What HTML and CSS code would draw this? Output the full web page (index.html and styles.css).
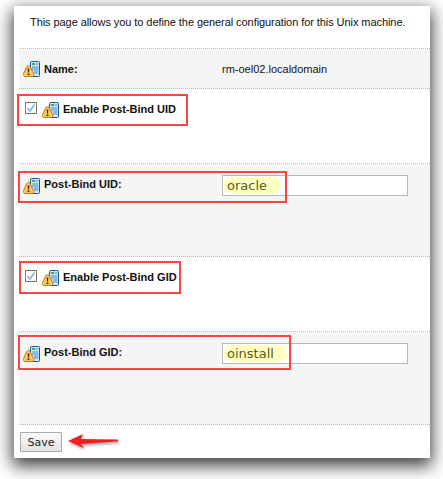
FILE: index.html
```html
<!DOCTYPE html>
<html lang="en">

<head>
    <meta charset="UTF-8">
    <title>Unix Machine Configuration</title>
    <link rel="stylesheet" href="styles.css">
</head>

<body>
    <svg class="defs" width="0" height="0">
        <symbol id="warn-icon" viewBox="0 0 17 16">
            <rect x="7.5" y="0.5" width="9" height="15" rx="1" fill="#d4e6f7" stroke="#14589f"/>
            <rect x="9" y="2" width="3" height="2" fill="#3cae48"/>
            <path d="M12.5 3h3M9 6h6.5M9 8h6.5M11 10h4.5M11 12h4.5" stroke="#3f8bd2" fill="none"/>
            <path d="M5.5 4.5C6.3 4.5 6.8 5 7.2 5.8L10.6 12.6C11.2 13.8 10.5 15.5 9.2 15.5H1.8C.5 15.5-.2 13.8.4 12.6L3.8 5.8C4.2 5 4.7 4.5 5.5 4.5Z" fill="#f8c860" stroke="#c27a1c"/>
            <path d="M4.7 7.5h1.6l-.3 4h-1zM4.6 12.5h1.8v1.5H4.6z" fill="#3e2a06"/>
        </symbol>
        <symbol id="check-box" viewBox="0 0 12 12">
            <rect x="0.5" y="0.5" width="11" height="11" fill="#fff" stroke="#7d776c"/>
            <path d="M2.5 6L5 9L9.5 2.5" fill="none" stroke="#7fb0e6" stroke-width="1.6"/>
        </symbol>
    </svg>

    <div class="window">
        <p class="intro">This page allows you to define the general configuration for this Unix machine.</p>

        <div class="form-rows">
            <div class="row row-name alt">
                <div class="label">
                    <svg class="icon"><use href="#warn-icon"/></svg>
                    <span>Name:</span>
                </div>
                <div class="value">rm-oel02.localdomain</div>
            </div>

            <div class="row row-check">
                <svg class="check"><use href="#check-box"/></svg>
                <svg class="icon"><use href="#warn-icon"/></svg>
                <span class="check-label">Enable Post-Bind UID</span>
            </div>

            <div class="row row-field alt">
                <div class="label">
                    <svg class="icon"><use href="#warn-icon"/></svg>
                    <span class="field-label">Post-Bind UID:</span>
                </div>
                <div class="value">
                    <div class="text-field"><span class="marked marked-uid">oracle</span></div>
                </div>
            </div>

            <div class="row row-check">
                <svg class="check"><use href="#check-box"/></svg>
                <svg class="icon"><use href="#warn-icon"/></svg>
                <span class="check-label">Enable Post-Bind GID</span>
            </div>

            <div class="row row-field alt">
                <div class="label">
                    <svg class="icon"><use href="#warn-icon"/></svg>
                    <span class="field-label">Post-Bind GID:</span>
                </div>
                <div class="value">
                    <div class="text-field"><span class="marked marked-gid">oinstall</span></div>
                </div>
            </div>
        </div>

        <div class="actions">
            <button type="button" class="save-btn">Save</button>
        </div>

        <!-- red annotations drawn on top of the screenshot -->
        <div class="callout callout-1"></div>
        <div class="callout callout-2"></div>
        <div class="callout callout-3"></div>
        <div class="callout callout-4"></div>
        <svg class="arrow" width="60" height="20" viewBox="0 0 60 20">
            <path d="M2 10L17 3L15 8L52 8.5L52 10.5L15 13L18 17Z" fill="#f01f1f"/>
        </svg>
    </div>
</body>

</html>
```

FILE: styles.css
```css
body {
    margin: 0;
    background-color: #fff;
    font-family: "Liberation Sans", Arial, sans-serif;
    font-size: 11px;
    color: #111;
    height: 479px;
    overflow: hidden;
}

.defs {
    position: absolute;
}

.window {
    position: relative;
    box-sizing: border-box;
    width: 416px;
    height: 452px;
    margin: 6px 0 0 14px;
    padding-left: 5px;
    background-color: #fff;
    box-shadow: 0 6px 16px 2px rgba(0, 0, 0, 0.75);
}

.intro {
    margin: 0;
    height: 42px;
    padding: 9px 0 0 11px;
    box-sizing: border-box;
    font-size: 11px;
    line-height: 14px;
    letter-spacing: -0.07px;
    white-space: nowrap;
}

.form-rows {
    border-top: 1px dotted #bbb;
}

.row {
    box-sizing: border-box;
    border-bottom: 1px dotted #bbb;
}

.alt {
    background-color: #f5f5f5;
}

.row-name,
.row-field {
    display: grid;
    grid-template-columns: 203px 1fr;
}

.row-name {
    height: 40px;
    align-items: center;
}

.row-field {
    height: 93px;
    padding-top: 11px;
}

.row-check {
    height: 75px;
    display: flex;
    align-items: flex-start;
    padding: 13px 0 0 6px;
}

.label {
    display: flex;
    align-items: center;
    gap: 4px;
    height: 21px;
    padding-left: 4px;
    font-weight: bold;
}

.row-name .label {
    height: auto;
}

.field-label {
    margin-top: -3px;
}

.icon {
    width: 17px;
    height: 16px;
    flex: none;
}

.check {
    width: 12px;
    height: 12px;
    margin: 0 5px 0 0;
    flex: none;
}

.check-label {
    margin-left: 4px;
    font-weight: bold;
    line-height: 14px;
}

.text-field {
    box-sizing: border-box;
    width: 186px;
    height: 21px;
    padding: 1px;
    background-color: #fff;
    border: 1px solid #b8b8b8;
    display: flex;
    align-items: center;
}

.marked {
    display: block;
    height: 17px;
    line-height: 17px;
    padding-left: 3px;
    border-radius: 9px;
    background-color: #ffffc0;
    font-family: "DejaVu Sans", sans-serif;
    font-size: 13px;
    color: #5c5c20;
}

.marked-uid {
    width: 54px;
}

.marked-gid {
    width: 60px;
}

.actions {
    padding: 7px 0 0 1px;
}

.save-btn {
    display: block;
    width: 42px;
    height: 20px;
    padding: 0;
    font-family: "DejaVu Sans", sans-serif;
    font-size: 11px;
    color: #222;
    background: linear-gradient(#fafafa, #e4e4de);
    border: 1px solid #aaa;
    border-radius: 1px;
}

.callout {
    position: absolute;
    box-sizing: border-box;
    border: 2px solid #fb4444;
}

.callout-1 {
    left: 3px;
    top: 88px;
    width: 171px;
    height: 32px;
}

.callout-2 {
    left: 4px;
    top: 165px;
    width: 269px;
    height: 32px;
}

.callout-3 {
    left: 5px;
    top: 255px;
    width: 162px;
    height: 33px;
}

.callout-4 {
    left: 4px;
    top: 329px;
    width: 273px;
    height: 35px;
}

.arrow {
    position: absolute;
    left: 52px;
    top: 425px;
    filter: drop-shadow(1px 2px 1px rgba(0, 0, 0, 0.35));
}
```
